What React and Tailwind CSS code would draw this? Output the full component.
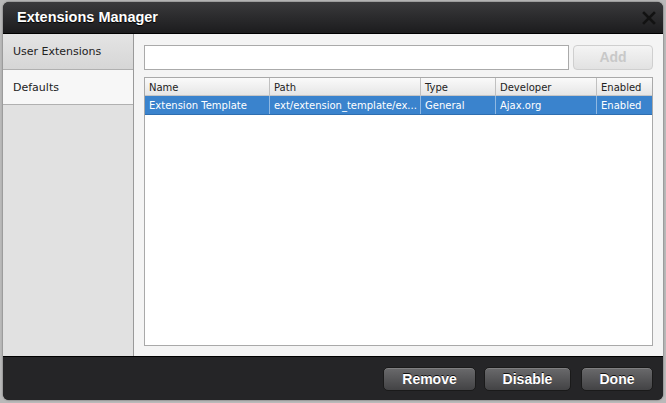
export default function App() {
  const btn =
    "h-[24px] rounded-[5px] border border-[#1a1a1a] bg-gradient-to-b from-[#6a6a6c] to-[#434345] text-white font-bold text-[14px] [text-shadow:0_-1px_0_#111] shadow-[inset_0_1px_0_rgba(255,255,255,0.15)] flex items-center justify-center";
  const cols = [
    { name: "Name", w: "w-[125px]", v: "Extension Template" },
    { name: "Path", w: "w-[151px]", v: "ext/extension_template/ex..." },
    { name: "Type", w: "w-[75px]", v: "General" },
    { name: "Developer", w: "w-[101px]", v: "Ajax.org" },
    { name: "Enabled", w: "flex-1", v: "Enabled" },
  ];
  return (
    <div className="w-[666px] h-[403px] bg-[#b9b9b9] pt-[2px] px-[3px] pb-[3px] overflow-hidden" style={{ fontFamily: "'DejaVu Sans', sans-serif" }}>
      <div className="h-[398px] flex flex-col rounded-[6px] overflow-hidden bg-[#222224] shadow-[0_0_2px_rgba(0,0,0,0.6)]">
        {/* title */}
        <div className="h-[32px] shrink-0 flex items-center justify-between pl-[14px] pr-[6px] bg-gradient-to-b from-[#3a3a3c] to-[#1c1c1e] border-b border-black">
          <span className="text-white font-bold text-[14.5px] [text-shadow:0_1px_1px_#000]" style={{ fontFamily: "'Liberation Sans', Arial, sans-serif" }}>
            Extensions Manager
          </span>
          <svg width="14" height="14" viewBox="0 0 14 14" className="mr-[1px]">
            <path d="M2 2 L12 12 M12 2 L2 12" stroke="#121212" strokeWidth="2.6" strokeLinecap="square" />
          </svg>
        </div>
        {/* content */}
        <div className="flex-1 flex min-h-0 bg-[#f4f4f4]">
          <div className="w-[131px] shrink-0 bg-[#e1e1e1] border-r border-[#9a9a9a] flex flex-col">
            <div className="h-[36px] flex items-center pl-[10px] pt-[2px] text-[11px] text-[#222] bg-gradient-to-b from-[#e4e4e4] to-[#d6d6d6] border-b border-[#b0b0b0]">
              User Extensions
            </div>
            <div className="h-[35px] flex items-center pl-[10px] pt-[2px] text-[11px] text-[#222] bg-[#f7f7f7] border-b border-[#b0b0b0]">
              Defaults
            </div>
          </div>
          <div className="flex-1 flex flex-col pt-[11px] pl-[10px] pr-[10px] pb-[10px] min-w-0">
            <div className="flex h-[25px] gap-[4px]">
              <div className="flex-1 bg-white border border-[#aaaaaa]" />
              <div className="w-[80px] rounded-[4px] border border-[#cfcfcf] bg-gradient-to-b from-[#f4f4f4] to-[#e2e2e2] flex items-center justify-center text-[14px] font-bold text-[#c8c8c8]" style={{ fontFamily: "'Liberation Sans', Arial, sans-serif" }}>
                Add
              </div>
            </div>
            <div className="mt-[7px] flex-1 bg-white border border-[#a9a9a9] flex flex-col">
              <div className="h-[18px] flex bg-gradient-to-b from-[#fafafa] to-[#e6e6e6] border-b border-[#c6c6c6]">
                {cols.map((c, i) => (
                  <div key={c.name} className={`${c.w} ${i < 4 ? "border-r border-[#c0c0c0]" : ""} flex items-center pl-[4px] pt-[1px] text-[10px] text-[#222] whitespace-nowrap overflow-hidden`}>
                    {c.name}
                  </div>
                ))}
              </div>
              <div className="h-[19px] flex bg-[#3a83cd] border-b border-[#2e6eb0]">
                {cols.map((c, i) => (
                  <div key={c.name} className={`${c.w} ${i < 4 ? "border-r border-[#8fb8e2]" : ""} flex items-center pl-[4px] text-[10px] text-white whitespace-nowrap overflow-hidden`}>
                    {c.v}
                  </div>
                ))}
              </div>
            </div>
          </div>
        </div>
        {/* footer */}
        <div className="h-[44px] shrink-0 bg-[#252527] border-t border-black flex items-center justify-end pr-[10px] pt-[1px]" style={{ fontFamily: "'Liberation Sans', Arial, sans-serif" }}>
          <div className={`${btn} w-[93px]`}>Remove</div>
          <div className={`${btn} w-[87px] ml-[8px]`}>Disable</div>
          <div className={`${btn} w-[72px] ml-[10px]`}>Done</div>
        </div>
      </div>
    </div>
  );
}
